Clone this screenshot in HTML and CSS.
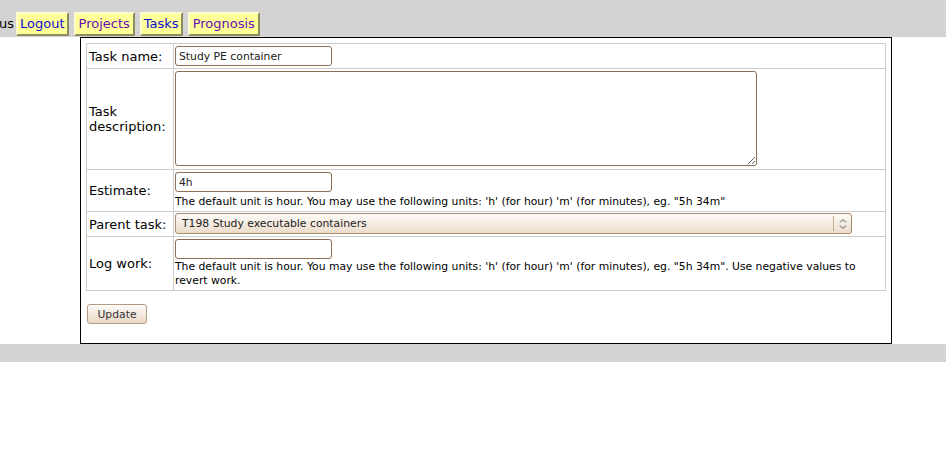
FILE: index.html
```html
<!DOCTYPE html>
<html>
<head>
<meta charset="utf-8">
<title>Edit task</title>
<link rel="stylesheet" href="styles.css">
</head>
<body>
<div class="header">
  <span class="user">us</span>
  <a class="navbtn" href="#">Logout</a>
  <a class="navbtn visited" href="#">Projects</a>
  <a class="navbtn" href="#">Tasks</a>
  <a class="navbtn visited" href="#">Prognosis</a>
</div>
<div class="main">
  <form class="form">
    <table class="fields">
      <tr>
        <td class="label">Task name:</td>
        <td class="value"><input class="text" type="text" value="Study PE container"></td>
      </tr>
      <tr>
        <td class="label">Task description:</td>
        <td class="value"><textarea class="area"></textarea></td>
      </tr>
      <tr>
        <td class="label">Estimate:</td>
        <td class="value"><input class="text" type="text" value="4h">
          <div class="hint">The default unit is hour. You may use the following units: 'h' (for hour) 'm' (for minutes), eg. "5h 34m"</div>
        </td>
      </tr>
      <tr>
        <td class="label nowrap">Parent task:</td>
        <td class="value selectcell">
          <div class="selectwrap">
            <select class="select"><option>T198 Study executable containers</option></select>
            <span class="arrows"><svg width="8" height="12" viewBox="0 0 8 12"><path d="M1 4.5 L4 1.5 L7 4.5 M1 7.5 L4 10.5 L7 7.5" fill="none" stroke="#555" stroke-width="1"/></svg></span>
          </div>
        </td>
      </tr>
      <tr>
        <td class="label">Log work:</td>
        <td class="value"><input class="text" type="text" value="">
          <div class="hint tight">The default unit is hour. You may use the following units: 'h' (for hour) 'm' (for minutes), eg. "5h 34m". Use negative values to revert work.</div>
        </td>
      </tr>
    </table>
    <button class="update" type="button">Update</button>
  </form>
</div>
<div class="footer"></div>
</body>
</html>
```
FILE: styles.css
```css
html, body {
  margin: 0;
  padding: 0;
  background: #ffffff;
  font-family: "DejaVu Sans", Verdana, sans-serif;
  font-size: 13px;
  color: #000;
}
.header {
  background: #d3d3d3;
  height: 37px;
  box-sizing: border-box;
  padding-top: 12px;
  display: flex;
  align-items: flex-start;
  white-space: nowrap;
}
.user {
  line-height: 24px;
  margin-left: -1px;
  margin-right: 2px;
}
.navbtn {
  display: inline-block;
  height: 24px;
  box-sizing: border-box;
  line-height: 20px;
  padding: 0 2px;
  margin-right: 5px;
  background: #ffff99;
  border: 2px solid #ffff99;
  border-top-color: #ffffcc;
  border-left-color: #ffffcc;
  border-right-color: #8c8c5c;
  border-bottom-color: #8c8c5c;
  color: #0c0cd0;
  text-decoration: none;
}
.navbtn.visited {
  color: #6a10b0;
  padding: 0 3px;
}
.main {
  margin-left: 80px;
  width: 812px;
  box-sizing: border-box;
  border: 1px solid #000;
  padding: 5px 5px 19px 5px;
}
.fields {
  width: 800px;
  border-collapse: collapse;
  border: 1px solid #cccccc;
}
.fields td {
  border: 1px solid #cccccc;
  padding: 2px 1px;
}
.label {
  width: 83px;
  padding-left: 2px !important;
  vertical-align: middle;
  font-size: 13px;
}
.nowrap {
  white-space: nowrap;
}
.value {
  vertical-align: top;
}
.fields td.selectcell {
  padding: 1px 1px 2px 1px;
}
.text {
  display: block;
  width: 157px;
  height: 20px;
  box-sizing: border-box;
  margin: 0;
  padding: 1px 3px;
  border: 1px solid #8d6e52;
  border-radius: 3px;
  background: #fff;
  font-family: "DejaVu Sans", sans-serif;
  font-size: 10.8px;
  color: #222;
  outline: none;
}
.area {
  display: block;
  width: 582px;
  height: 95px;
  box-sizing: border-box;
  margin: 0 0 1px 0;
  border: 1px solid #8d6e52;
  border-radius: 3px;
  background: #fff;
  resize: both;
}
.hint {
  font-size: 10.8px;
  line-height: 14px;
  margin-top: 3px;
  color: #000;
}
.hint.tight {
  margin-top: 1px;
}
.selectwrap {
  position: relative;
  width: 677px;
  height: 21px;
}
.select {
  -webkit-appearance: none;
  appearance: none;
  display: block;
  width: 677px;
  height: 21px;
  box-sizing: border-box;
  margin: 0;
  padding: 0 0 0 6px;
  border: 1px solid #a88a6c;
  border-radius: 3px;
  background: linear-gradient(#fdfbf8, #ecdccb);
  font-family: "DejaVu Sans", sans-serif;
  font-size: 10.8px;
  color: #222;
}
.arrows {
  position: absolute;
  right: 1px;
  top: 3px;
  height: 15px;
  width: 17px;
  border-left: 1px solid #c7ab8f;
  display: flex;
  align-items: center;
  justify-content: center;
  pointer-events: none;
}
.update {
  display: block;
  margin: 13px 0 0 1px;
  width: 60px;
  height: 20px;
  box-sizing: border-box;
  padding: 0;
  border: 1px solid #b39a82;
  border-radius: 3px;
  background: linear-gradient(#fdfbf8, #ead8c5);
  font-family: "DejaVu Sans", sans-serif;
  font-size: 10.8px;
  color: #333;
}
.footer {
  background: #d3d3d3;
  height: 18px;
}
```
